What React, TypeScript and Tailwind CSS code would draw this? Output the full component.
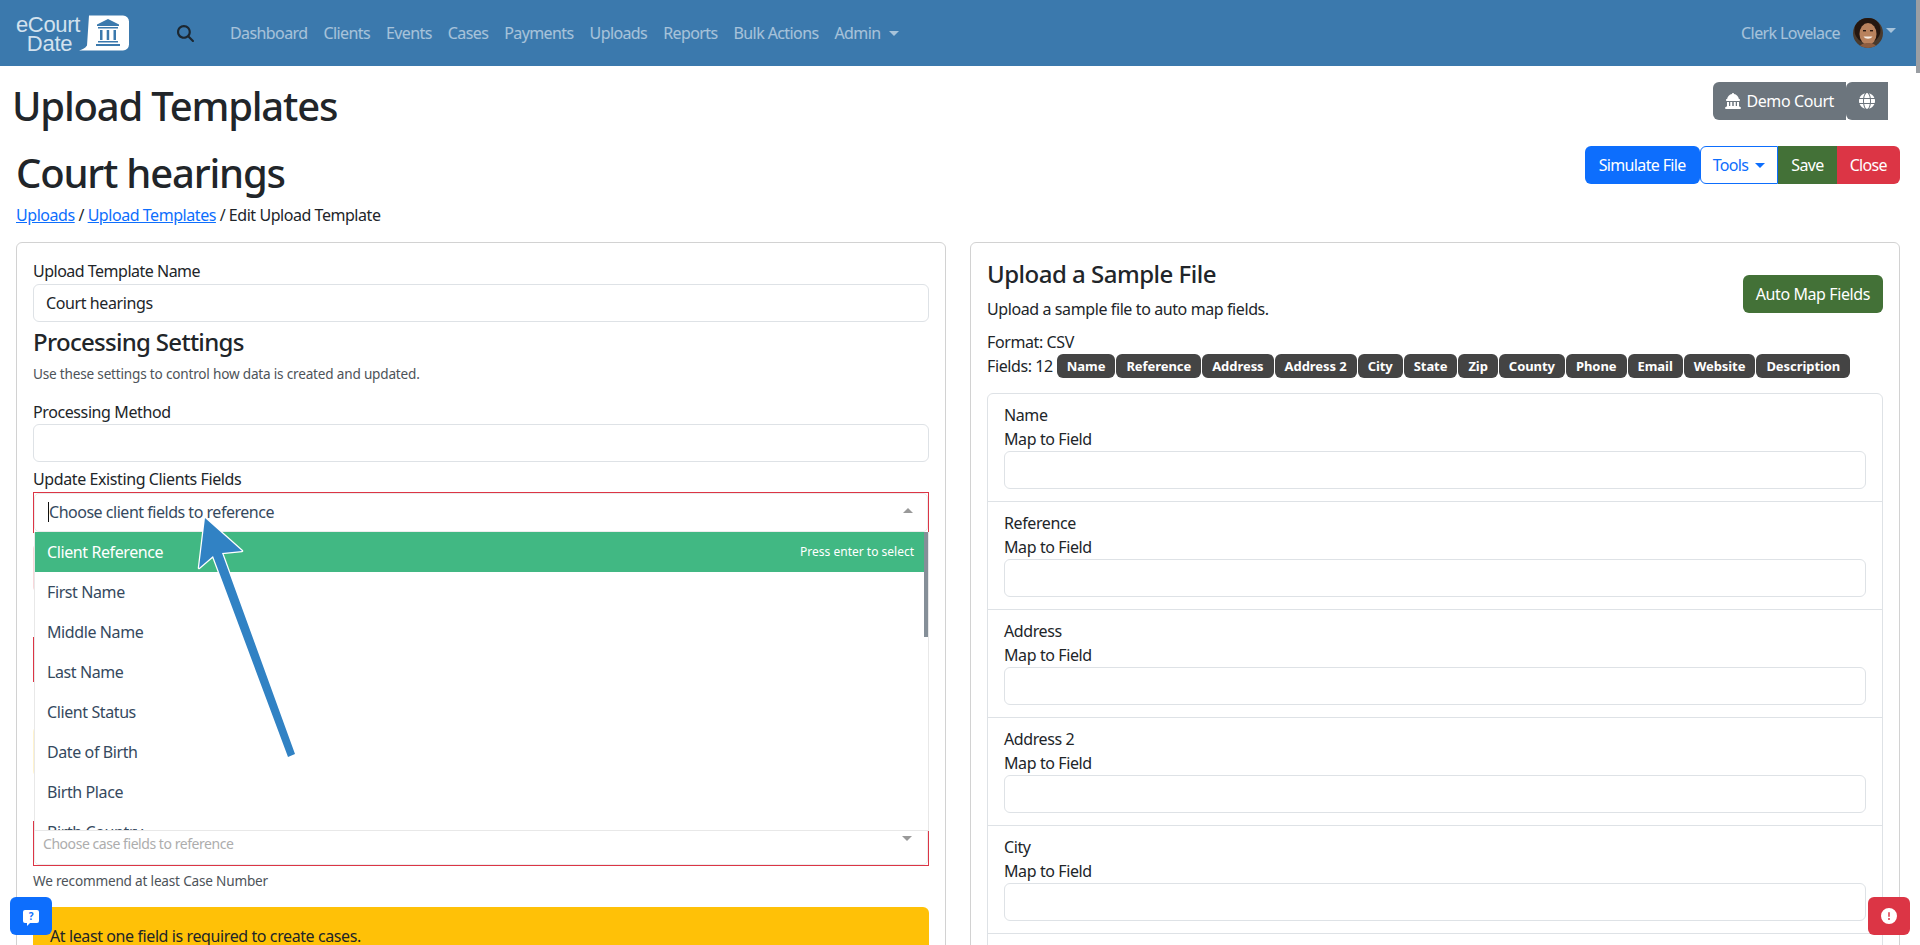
import { FaCircleExclamation, FaGlobe, FaLandmarkDome, FaMagnifyingGlass } from 'react-icons/fa6';

const navLinks = ['Dashboard', 'Clients', 'Events', 'Cases', 'Payments', 'Uploads', 'Reports', 'Bulk Actions'];
const badges = ['Name', 'Reference', 'Address', 'Address 2', 'City', 'State', 'Zip', 'County', 'Phone', 'Email', 'Website', 'Description'];
const mapped = ['Name', 'Reference', 'Address', 'Address 2', 'City', 'State'];
const options = ['First Name', 'Middle Name', 'Last Name', 'Client Status', 'Date of Birth', 'Birth Place', 'Birth Country'];

function Caret({ className }: { className: string }) {
  return <span className={`inline-block h-0 w-0 border-x-[5px] border-t-[5px] border-x-transparent ${className}`} />;
}

function Logo() {
  return (
    <div className="flex items-center">
      <div className="w-[66px] pt-[2px] text-center font-['Liberation_Sans',sans-serif] text-[22px] leading-[19px] font-light tracking-[-0.3px] text-[#d3e2ee]">
        eCourt
        <br />
        <span className="pl-[3px]">Date</span>
      </div>
      <svg width="52" height="36" viewBox="0 0 52 36" className="-ml-[3px]">
        <path d="M10 0h34a6 6 0 0 1 6 6v23a6 6 0 0 1-6 6H0c3-1 6-2 8-5z" transform="translate(1 0.5)" fill="#fff" />
        <g fill="#3b79ad">
          <path d="M30 4l11 5.5v1.5H19V9.500z" />
          <rect x="20" y="12" width="20" height="1.5" />
          <rect x="22" y="15" width="2.500" height="10" />
          <rect x="28.7" y="15" width="2.500" height="10" />
          <rect x="35.500" y="15" width="2.500" height="10" />
          <rect x="20" y="26" width="20" height="1.500" />
          <rect x="18" y="29" width="24" height="2" />
        </g>
      </svg>
    </div>
  );
}

function Avatar() {
  return (
    <svg width="30" height="30" viewBox="0 0 30 30">
      <defs>
        <clipPath id="avatar-clip">
          <circle cx="15" cy="15" r="15" />
        </clipPath>
      </defs>
      <g clipPath="url(#avatar-clip)">
        <rect width="30" height="30" fill="#4a3a2c" />
        <ellipse cx="14.500" cy="12" rx="13" ry="13" fill="#24160f" />
        <ellipse cx="15" cy="16" rx="8.500" ry="11" fill="#b9825d" />
        <path d="M6 30c1-4 5-5 9-5s8 1 9 5z" fill="#8d5d40" />
        <rect x="10" y="12" width="3" height="1.400" fill="#2c1a12" />
        <rect x="17" y="12" width="3" height="1.400" fill="#2c1a12" />
        <path d="M10.500 18.500c2 3 7 3 9 0z" fill="#f6ece4" />
      </g>
    </svg>
  );
}

function Navbar() {
  return (
    <nav className="flex h-[66px] items-center bg-[#3b79ad] pl-[15px] pr-[24px] tracking-[-0.6px] text-white/55">
      <Logo />
      <FaMagnifyingGlass className="ml-[47px] size-[17px] text-[#1c2730]" />
      <div className="ml-[36px] flex items-center gap-[16px]">
        {navLinks.map((link) => (
          <a key={link}>{link}</a>
        ))}
        <a className="flex items-center gap-[8px]">
          Admin
          <Caret className="border-t-white/55" />
        </a>
      </div>
      <div className="ml-auto flex items-center">
        <span>Clerk Lovelace</span>
        <span className="ml-[13px]">
          <Avatar />
        </span>
        <Caret className="ml-[3px] mb-[6px] border-t-white/55" />
      </div>
    </nav>
  );
}

function Header() {
  return (
    <div>
      <div className="flex items-start justify-between pl-[12px] pr-[32px] pt-[16px]">
        <h1 className="text-[40px] leading-[48px] font-medium tracking-[-1.2px]">Upload Templates</h1>
        <div className="flex text-white">
          <button className="flex h-[38px] items-center gap-[5px] rounded-l-md bg-[#6c757d] px-[12px]">
            <FaLandmarkDome className="size-[16px]" />
            Demo Court
          </button>
          <button className="flex h-[38px] w-[42px] items-center justify-center rounded-l-md bg-[#6c757d]">
            <FaGlobe className="size-[16px]" />
          </button>
        </div>
      </div>
      <div className="mt-[19px] flex items-start justify-between pl-[16px] pr-[20px]">
        <h1 className="text-[40px] leading-[48px] font-medium tracking-[-1.2px]">Court hearings</h1>
        <div className="-mt-[3px] flex tracking-[-0.65px]">
          <button className="h-[38px] rounded-md bg-[#0d6efd] px-[14px] text-white">Simulate File</button>
          <button className="flex h-[38px] items-center gap-[7px] rounded-l-md border border-[#0d6efd] bg-white px-[12px] text-[#0d6efd]">
            Tools
            <Caret className="border-t-[#0d6efd]" />
          </button>
          <button className="h-[38px] bg-[#437137] px-[13px] text-white">Save</button>
          <button className="h-[38px] rounded-r-md bg-[#dc3545] px-[13px] text-white">Close</button>
        </div>
      </div>
      <div className="mt-[6px] pl-[16px] tracking-[-0.45px]">
        <a className="text-[#0d6efd] underline">Uploads</a> / <a className="text-[#0d6efd] underline">Upload Templates</a> / Edit
        Upload Template
      </div>
    </div>
  );
}

function Input() {
  return <div className="h-[38px] rounded-md border border-[#dee2e6] bg-white" />;
}

function Dropdown() {
  return (
    <div className="absolute top-[40px] right-0 left-px z-10 h-[299px] overflow-hidden border-x border-b border-[#e8e8e8] bg-white text-[#35495e]">
      <div className="flex h-[40px] items-center justify-between bg-[#41b883] pl-[12px] pr-[14px] text-white">
        <span>Client Reference</span>
        <span className="text-[12px] tracking-normal">Press enter to select</span>
      </div>
      {options.map((option) => (
        <div key={option} className="flex h-[40px] items-center pl-[12px]">
          {option}
        </div>
      ))}
      <div className="absolute top-0 right-0 h-[105px] w-[4px] bg-[#858f98]" />
    </div>
  );
}

function ProcessingCard() {
  return (
    <div className="flex-1 rounded-md border border-[#d2d2d2] p-[16px]">
      <label className="block tracking-[-0.5px]">Upload Template Name</label>
      <div className="mt-px flex h-[38px] items-center rounded-md border border-[#dee2e6] pl-[12px]">Court hearings</div>
      <h3 className="mt-[5px] text-[24px] leading-[29px] font-medium tracking-[-0.7px]">Processing Settings</h3>
      <p className="mt-[8px] text-[13.6px] leading-[20px] tracking-[-0.2px] text-[#4d5359]">Use these settings to control how data is created and updated.</p>
      <label className="mt-[16px] block">Processing Method</label>
      <Input />
      <label className="mt-[5px] block">Update Existing Clients Fields</label>
      <div className="relative mt-px">
        <div className="h-[41px] border border-[#dc3545]">
          <div className="flex h-full items-center rounded-[5px] border border-[#ececec] pl-[13px] pb-[2px] tracking-[-0.48px] text-[#35495e]">
            <span className="border-l border-[#111] leading-[20px]">Choose client fields to reference</span>
            <Caret className="absolute right-[16px] top-[16px] rotate-180 border-t-[#999]" />
          </div>
        </div>
        <Dropdown />
      </div>
      <div className="mt-[10px] mr-px h-[50px] rounded-md bg-[#f8d7da]" />
      <div className="mt-[44px] h-[45px] border border-[#dc3545]" />
      <div className="mt-[44px] mr-px h-[51px] rounded-md bg-[#fff3cd]" />
      <div className="relative mt-[44px] h-[45px] border border-[#dc3545]">
        <div className="flex h-full items-center rounded-[5px] border border-[#ececec] pl-[8px] pt-[1px] text-[14px] tracking-[-0.45px] text-[#adadad]">
          Choose case fields to reference
          <Caret className="absolute right-[16px] top-[14px] border-t-[#999]" />
        </div>
      </div>
      <p className="mt-[5px] text-[13.6px] leading-[20px] tracking-[-0.2px] text-[#4d5359]">We recommend at least Case Number</p>
      <div className="mt-[16px] rounded-md bg-[#ffc107] p-[17px]">At least one field is required to create cases.</div>
    </div>
  );
}

function SampleCard() {
  return (
    <div className="flex-1 rounded-md border border-[#d2d2d2] p-[16px]">
      <div className="flex items-start justify-between">
        <div>
          <h3 className="text-[24px] leading-[29px] font-medium tracking-[-0.5px]">Upload a Sample File</h3>
          <p className="mt-[9px]">Upload a sample file to auto map fields.</p>
        </div>
        <button className="mt-[16px] h-[38px] rounded-md bg-[#437137] px-[13px] text-white">Auto Map Fields</button>
      </div>
      <div className="mt-[9px]">Format: CSV</div>
      <div className="flex items-center">
        <span className="mr-[4px]">Fields: 12</span>
        <div className="flex gap-px">
          {badges.map((badge) => (
            <span key={badge} className="flex h-[24px] items-center rounded-md bg-[#444] px-[10px] text-[13px] font-bold tracking-[-0.06px] text-white">
              {badge}
            </span>
          ))}
        </div>
      </div>
      <div className="mt-[15px] rounded-md border border-[#dee2e6]">
        {mapped.map((field) => (
          <div key={field} className="h-[108px] border-b border-[#dee2e6] px-[16px] pt-[9px]">
            <div>{field}</div>
            <div>Map to Field</div>
            <Input />
          </div>
        ))}
      </div>
    </div>
  );
}

function Pointer() {
  return (
    <svg className="absolute top-0 left-0 z-20" width="320" height="780" viewBox="0 0 320 780">
      <path
        d="M205 518L242 551L222 553L295 754L288 757L213 556L199 568Z"
        fill="#3182c4"
        stroke="#fff"
        strokeWidth="2.5"
        strokeLinejoin="round"
        paintOrder="stroke"
      />
    </svg>
  );
}

export default function App() {
  return (
    <div className="relative h-[945px] overflow-hidden bg-white font-['Noto_Sans',sans-serif] text-[16px] leading-[24px] tracking-[-0.4px] text-[#212529]">
      <Navbar />
      <Header />
      <div className="mt-[15px] flex gap-[24px] pl-[16px] pr-[20px]">
        <ProcessingCard />
        <SampleCard />
      </div>
      <Pointer />
      <button className="absolute top-[897px] left-[10px] z-30 flex h-[38px] w-[42px] items-center justify-center rounded-md bg-[#0d6efd]">
        <span className="relative flex h-[13px] w-[16px] items-center justify-center rounded-[2px] bg-white text-[10px] leading-none font-bold text-[#0d6efd]">
          ?
          <span className="absolute -bottom-[3px] left-[4px] h-0 w-0 border-t-[4px] border-r-[4px] border-t-white border-r-transparent" />
        </span>
      </button>
      <button className="absolute top-[897px] left-[1868px] z-30 flex h-[38px] w-[42px] items-center justify-center rounded-md bg-[#dc3545] text-white">
        <FaCircleExclamation className="size-[16px]" />
      </button>
      <div className="absolute top-0 right-0 z-30 h-[73px] w-[4px] bg-[#9a9ea3]" />
    </div>
  );
}
